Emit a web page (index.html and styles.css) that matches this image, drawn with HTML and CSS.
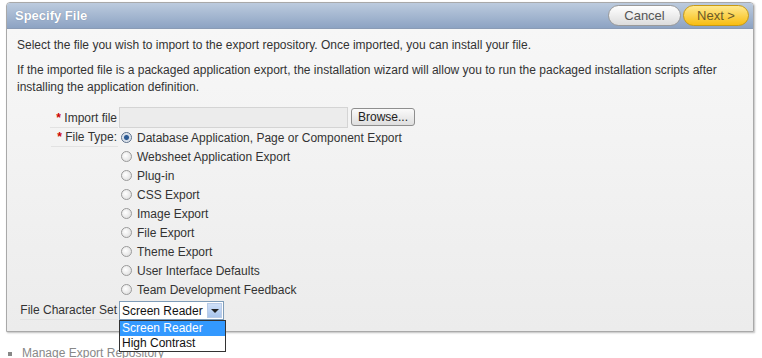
FILE: index.html
```html
<!DOCTYPE html>
<html lang="en">
<head>
    <meta charset="UTF-8">
    <title>Specify File</title>
    <link rel="stylesheet" href="styles.css">
</head>
<body>
    <div class="region">
        <div class="region-header">
            <h2>Specify File</h2>
            <div class="header-buttons">
                <button class="btn btn-cancel">Cancel</button>
                <button class="btn btn-next">Next &gt;</button>
            </div>
        </div>
        <div class="region-body">
            <p>Select the file you wish to import to the export repository. Once imported, you can install your file.</p>
            <p>If the imported file is a packaged application export, the installation wizard will allow you to run the packaged installation scripts after installing the application definition.</p>

            <div class="form">
                <div class="row row-file">
                    <div class="label-cell"><label class="req"><span class="star">*</span> Import file</label></div>
                    <div class="field">
                        <span class="file-box"></span>
                        <button class="browse">Browse...</button>
                    </div>
                </div>
                <div class="row">
                    <div class="label-cell"><label class="req"><span class="star">*</span> File Type:</label></div>
                    <ul class="radio-list">
                        <li><span class="radio checked"></span>Database Application, Page or Component Export</li>
                        <li><span class="radio"></span>Websheet Application Export</li>
                        <li><span class="radio"></span>Plug-in</li>
                        <li><span class="radio"></span>CSS Export</li>
                        <li><span class="radio"></span>Image Export</li>
                        <li><span class="radio"></span>File Export</li>
                        <li><span class="radio"></span>Theme Export</li>
                        <li><span class="radio"></span>User Interface Defaults</li>
                        <li><span class="radio"></span>Team Development Feedback</li>
                    </ul>
                </div>
                <div class="row row-select">
                    <div class="label-cell"><label>File Character Set</label></div>
                    <div class="field">
                        <div class="select">
                            <span class="select-value">Screen Reader</span>
                            <span class="select-arrow"></span>
                            <ul class="select-menu">
                                <li class="active">Screen Reader</li>
                                <li>High Contrast</li>
                            </ul>
                        </div>
                    </div>
                </div>
            </div>
        </div>
    </div>

    <ul class="links">
        <li>Manage Export Repository</li>
    </ul>
</body>
</html>
```

FILE: styles.css
```css
body {
    margin: 0;
    font-family: 'Liberation Sans', Arial, sans-serif;
    font-size: 12px;
    color: #333;
    background: #fff;
}
.region {
    margin: 2px 8px 0 6px;
    border: 1px solid #a9a9a9;
    border-radius: 4px 4px 0 0;
    box-shadow: 1px 1px 2px rgba(0,0,0,0.25);
    background: linear-gradient(#f8f8f8, #ececec);
}
.region-header {
    height: 25px;
    display: flex;
    align-items: center;
    justify-content: space-between;
    padding: 0 4px 0 8px;
    background: linear-gradient(#bccbde, #8da3c3);
    border-bottom: 1px solid #8a9bb5;
    border-radius: 3px 3px 0 0;
}
.region-header h2 {
    margin: 0;
    font-size: 13px;
    font-weight: bold;
    color: #fff;
    text-shadow: 0 0 1px rgba(60,80,110,0.5);
}
.header-buttons {
    display: flex;
    gap: 2px;
}
.btn {
    height: 21px;
    border-radius: 11px;
    font-family: inherit;
    font-size: 13px;
    padding: 0;
    cursor: pointer;
}
.btn-cancel {
    width: 73px;
    border: 1px solid #9a9a9a;
    color: #555;
    background: linear-gradient(#ffffff, #dcdcdc);
}
.btn-next {
    width: 66px;
    border: 1px solid #c99a12;
    color: #6a5a2a;
    background: linear-gradient(#ffe98f, #f8bd12);
}
.region-body {
    padding: 8px 10px 10px 10px;
}
.region-body p {
    margin: 0 0 8px 0;
    line-height: 17px;
}
.form {
    margin-top: 10px;
}
.row {
    display: flex;
}
.label-cell {
    width: 101px;
    flex: none;
    text-align: right;
}
.label-cell label {
    display: inline-block;
    padding: 0 1px 0 6px;
    border-bottom: 1px solid #e2e2e2;
    line-height: 18px;
}
.star {
    color: #c00;
    font-weight: bold;
}
.row-file {
    height: 22px;
    align-items: center;
}
.row-file .label-cell label {
    margin-top: 2px;
}
.field {
    display: flex;
    align-items: center;
    padding-left: 1px;
}
.file-box {
    width: 227px;
    height: 19px;
    border: 1px solid #d4d4d4;
    background: #ececec;
}
.browse {
    margin-left: 3px;
    width: 64px;
    height: 18px;
    padding: 0;
    font-family: inherit;
    font-size: 12px;
    color: #222;
    border: 1px solid #8e8e8e;
    border-radius: 3px;
    background: linear-gradient(#fafafa, #dedede);
}
.radio-list {
    list-style: none;
    margin: 0;
    padding: 0 0 0 3px;
}
.radio-list li {
    height: 19px;
    display: flex;
    align-items: center;
}
.radio {
    width: 11px;
    height: 11px;
    margin-right: 5px;
    border-radius: 50%;
    border: 1px solid #9a9a9a;
    background: radial-gradient(circle at 40% 40%, #ffffff, #d8d8d8);
    box-sizing: border-box;
}
.radio.checked {
    border-color: #5a6f8a;
    background: radial-gradient(circle, #2c5a93 0, #2c5a93 2px, #cfd9e6 3px, #f2f4f7 5px);
}
.row-select {
    height: 21px;
    margin-top: 1px;
    align-items: center;
}
.row-select .label-cell label {
    padding-left: 0;
}
.select {
    position: relative;
    width: 103px;
    height: 17px;
    border: 1px solid #7f9db9;
    background: #fff;
    display: flex;
    align-items: center;
}
.select-value {
    flex: 1;
    padding-left: 2px;
    color: #111;
}
.select-arrow {
    width: 15px;
    height: 15px;
    margin-right: 1px;
    background: linear-gradient(#cfe0f8, #a8c4ec);
    border: 1px solid #b9cbe6;
    box-sizing: border-box;
    position: relative;
}
.select-arrow::after {
    content: "";
    position: absolute;
    left: 3px;
    top: 5px;
    border-left: 4px solid transparent;
    border-right: 4px solid transparent;
    border-top: 4px solid #222;
}
.select-menu {
    position: absolute;
    top: 18px;
    left: -1px;
    width: 105px;
    margin: 0;
    padding: 0;
    list-style: none;
    border: 1px solid #333;
    background: #fff;
    z-index: 2;
}
.select-menu li {
    height: 15px;
    line-height: 15px;
    padding-left: 2px;
    color: #111;
}
.select-menu li.active {
    background: #3399ff;
    color: #fff;
}
.links {
    margin: 14px 0 0 0;
    padding: 0 0 0 22px;
    color: #888;
}
.links li {
    list-style: square;
    font-size: 12px;
}
```
